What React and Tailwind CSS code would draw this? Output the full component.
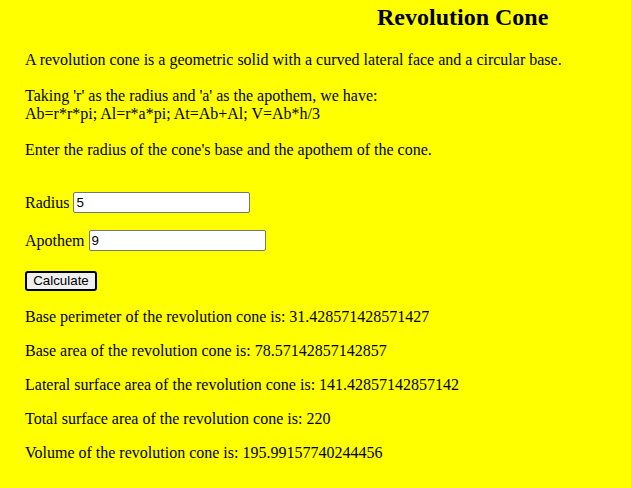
import React from "react";

const results = [
  "Base perimeter of the revolution cone is: 31.428571428571427",
  "Base area of the revolution cone is: 78.57142857142857",
  "Lateral surface area of the revolution cone is: 141.42857142857142",
  "Total surface area of the revolution cone is: 220",
  "Volume of the revolution cone is: 195.99157740244456",
];

export default function App() {
  return (
    <div className="min-h-screen bg-[#ffff00] text-black pl-[25px] pt-[4px] text-[16px] leading-[18px] font-['Liberation_Serif',serif]">
      <h2 className="text-[24px] leading-[27px] font-bold pl-[352px]">
        Revolution Cone
      </h2>

      <p className="mt-[20px]">
        A revolution cone is a geometric solid with a curved lateral face and a
        circular base.
      </p>

      <p className="mt-[18px]">
        Taking 'r' as the radius and 'a' as the apothem, we have:
        <br />
        Ab=r*r*pi; Al=r*a*pi; At=Ab+Al; V=Ab*h/3
      </p>

      <p className="mt-[18px]">
        Enter the radius of the cone's base and the apothem of the cone.
      </p>

      <div className="mt-[33px] flex items-center gap-[4px]">
        <span>Radius</span>
        <Field value="5" />
      </div>

      <div className="mt-[17px] flex items-center gap-[4px]">
        <span>Apothem</span>
        <Field value="9" />
      </div>

      <button className="mt-[20px] w-[72px] h-[20px] bg-[#efefef] border-2 border-black rounded-[3px] text-[13.33px] leading-none font-['Liberation_Sans',sans-serif]">
        Calculate
      </button>

      <div className="mt-[17px] flex flex-col gap-[16px]">
        {results.map((r) => (
          <p key={r}>{r}</p>
        ))}
      </div>
    </div>
  );
}

function Field({ value }) {
  return (
    <input
      readOnly
      value={value}
      className="w-[177px] h-[21px] bg-white border border-[#767676] rounded-[2px] px-[2px] text-[13.33px] font-['Liberation_Sans',sans-serif] outline-none"
    />
  );
}
